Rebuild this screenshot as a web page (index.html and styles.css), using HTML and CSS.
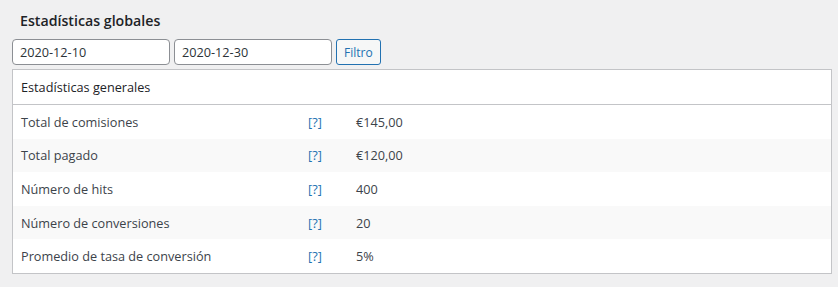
FILE: index.html
```html
<!DOCTYPE html>
<html lang="es">
<head>
    <meta charset="UTF-8">
    <title>Estadísticas globales</title>
    <link rel="stylesheet" href="styles.css">
</head>
<body>
    <div class="wrap">
        <h2 class="page-title">Estadísticas globales</h2>
        <form class="filter-form">
            <input type="text" class="date-input" value="2020-12-10">
            <input type="text" class="date-input" value="2020-12-30">
            <button type="button" class="button">Filtro</button>
        </form>
        <table class="stats">
            <thead>
                <tr><th colspan="3">Estadísticas generales</th></tr>
            </thead>
            <tbody>
                <tr><td class="label">Total de comisiones</td><td class="help"><a href="#">[?]</a></td><td>€145,00</td></tr>
                <tr><td class="label">Total pagado</td><td class="help"><a href="#">[?]</a></td><td>€120,00</td></tr>
                <tr><td class="label">Número de hits</td><td class="help"><a href="#">[?]</a></td><td>400</td></tr>
                <tr><td class="label">Número de conversiones</td><td class="help"><a href="#">[?]</a></td><td>20</td></tr>
                <tr><td class="label">Promedio de tasa de conversión</td><td class="help"><a href="#">[?]</a></td><td>5%</td></tr>
            </tbody>
        </table>
    </div>
</body>
</html>
```

FILE: styles.css
```css
body {
    font-family: "Open Sans", "Noto Sans", sans-serif;
    font-size: 12.7px;
    background-color: #f0f0f1;
    color: #3c434a;
    margin: 0;
    padding: 0;
}
.wrap {
    padding: 10px 6px 0 12px;
}
.page-title {
    margin: 0 0 0 8px;
    font-size: 14.2px;
    font-weight: 600;
    color: #1d2327;
    line-height: 22px;
}
.filter-form {
    display: flex;
    gap: 4px;
    margin-top: 7px;
}
.date-input {
    width: 158px;
    height: 26px;
    box-sizing: border-box;
    border: 1px solid #8c8f94;
    border-radius: 4px;
    padding: 0 7px;
    font-family: inherit;
    font-size: 12.7px;
    color: #2c3338;
    background: #fff;
}
.button {
    height: 26px;
    box-sizing: border-box;
    padding: 0 7px;
    border: 1px solid #2271b1;
    border-radius: 3px;
    background-color: #f6f7f7;
    color: #2271b1;
    font-family: inherit;
    font-size: 12px;
}
.stats {
    width: 820px;
    margin-top: 4px;
    border: 1px solid #c3c4c7;
    border-collapse: collapse;
    background-color: #fff;
}
.stats th {
    text-align: left;
    font-weight: normal;
    height: 34px;
    padding: 0 8px;
    border-bottom: 1px solid #c3c4c7;
    color: #1d2327;
}
.stats td {
    height: 33.6px;
    padding: 0 10px 0 0;
}
.stats td.label {
    width: 277px;
    padding-left: 8px;
}
.stats td.help {
    width: 38px;
}
.stats tbody tr:nth-child(even) {
    background-color: #f9f9f9;
}
.stats a {
    color: #2271b1;
    text-decoration: none;
}
```
